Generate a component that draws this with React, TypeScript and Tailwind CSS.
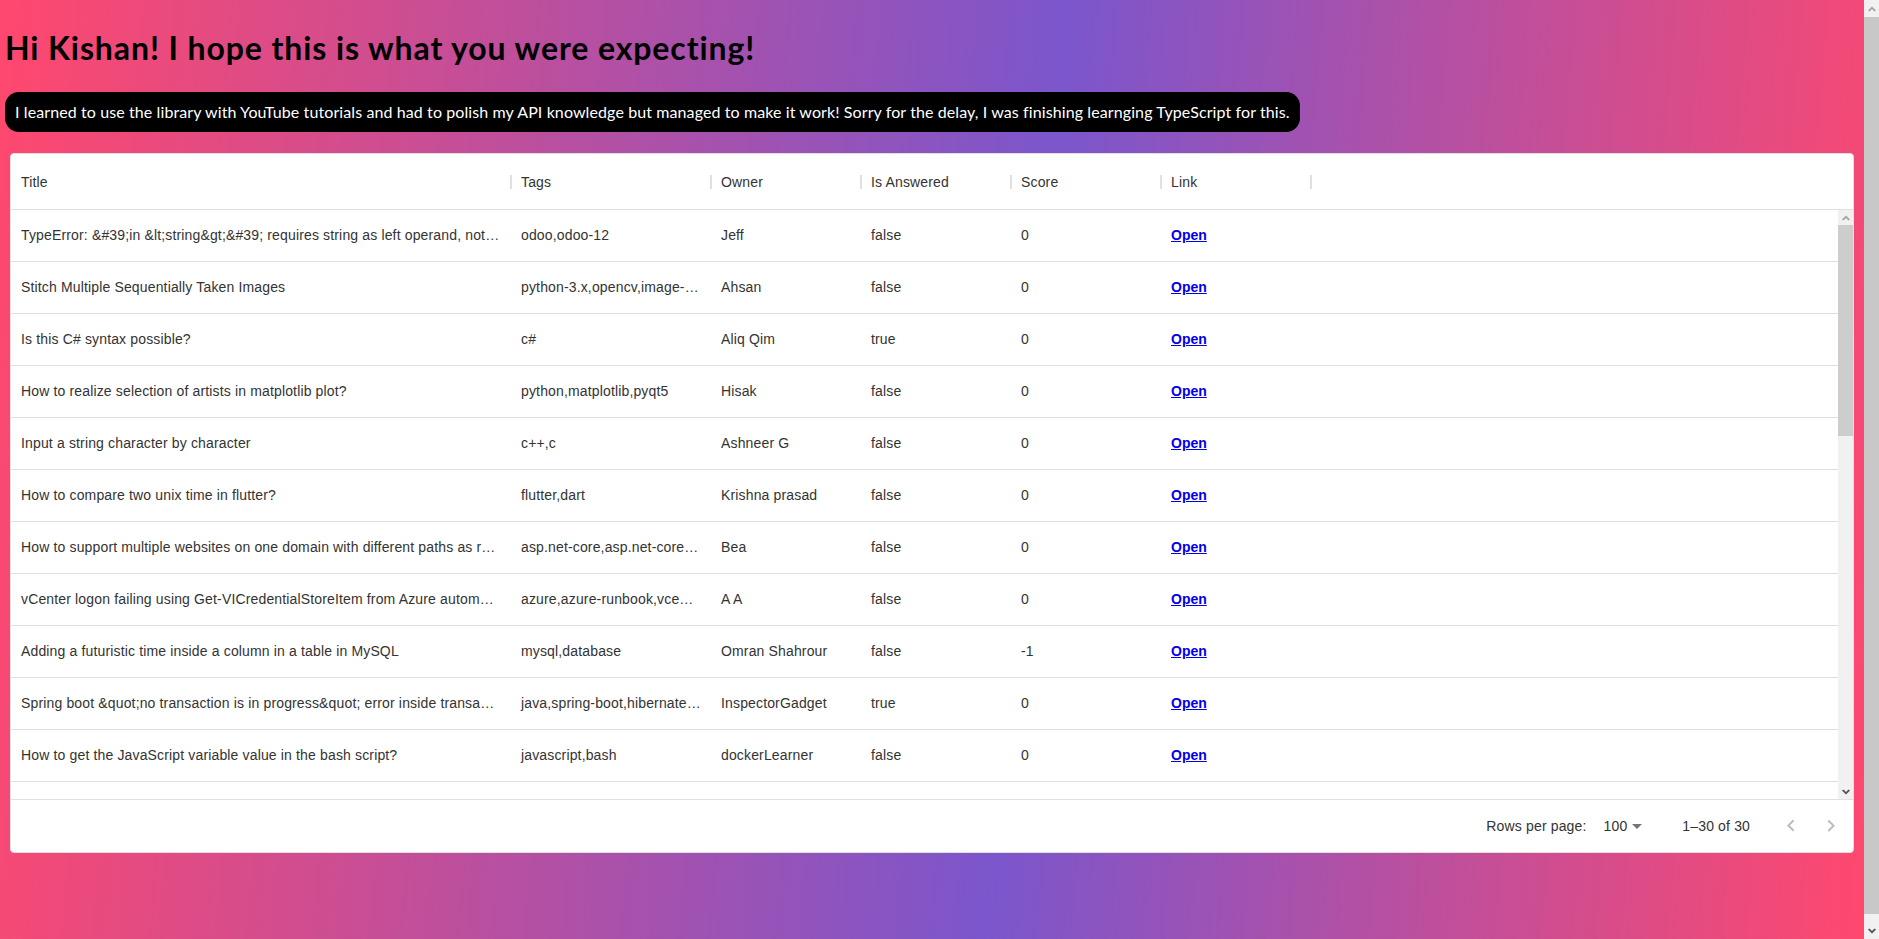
import type { ReactNode } from "react";

type Row = {
  title: string;
  tags: string;
  owner: string;
  answered: boolean;
  score: number;
};

const ROWS: Row[] = [
  { title: "TypeError: &#39;in &lt;string&gt;&#39; requires string as left operand, not NoneType", tags: "odoo,odoo-12", owner: "Jeff", answered: false, score: 0 },
  { title: "Stitch Multiple Sequentially Taken Images", tags: "python-3.x,opencv,image-processing", owner: "Ahsan", answered: false, score: 0 },
  { title: "Is this C# syntax possible?", tags: "c#", owner: "Aliq Qim", answered: true, score: 0 },
  { title: "How to realize selection of artists in matplotlib plot?", tags: "python,matplotlib,pyqt5", owner: "Hisak", answered: false, score: 0 },
  { title: "Input a string character by character", tags: "c++,c", owner: "Ashneer G", answered: false, score: 0 },
  { title: "How to compare two unix time in flutter?", tags: "flutter,dart", owner: "Krishna prasad", answered: false, score: 0 },
  { title: "How to support multiple websites on one domain with different paths as routes?", tags: "asp.net-core,asp.net-core-mvc", owner: "Bea", answered: false, score: 0 },
  { title: "vCenter logon failing using Get-VICredentialStoreItem from Azure automation runbook", tags: "azure,azure-runbook,vcenter,powercli", owner: "A A", answered: false, score: 0 },
  { title: "Adding a futuristic time inside a column in a table in MySQL", tags: "mysql,database", owner: "Omran Shahrour", answered: false, score: -1 },
  { title: "Spring boot &quot;no transaction is in progress&quot; error inside transactional method", tags: "java,spring-boot,hibernate,jpa", owner: "InspectorGadget", answered: true, score: 0 },
  { title: "How to get the JavaScript variable value in the bash script?", tags: "javascript,bash", owner: "dockerLearner", answered: false, score: 0 },
  { title: "Why does my Docker container exit immediately?", tags: "docker", owner: "Sam", answered: false, score: 0 },
];

const COLUMNS = [
  { label: "Title", width: "w-[500px]" },
  { label: "Tags", width: "w-[200px]" },
  { label: "Owner", width: "w-[150px]" },
  { label: "Is Answered", width: "w-[150px]" },
  { label: "Score", width: "w-[150px]" },
  { label: "Link", width: "w-[150px]" },
];

// petite flèche des barres de défilement
const ScrollArrow = ({ up, dark }: { up?: boolean; dark?: boolean }) => (
  <svg width="8" height="6" viewBox="0 0 8 6" className={up ? "" : "rotate-180"}>
    <polygon points="0,4.5 4,0.5 8,4.5 6.5,5.5 4,3 1.5,5.5" fill={dark ? "#505050" : "#a3a3a3"} />
  </svg>
);

const Cell = ({ width, children }: { width: string; children: ReactNode }) => (
  <div className={`${width} shrink-0 truncate px-[10px]`}>{children}</div>
);

const App = () => {
  return (
    <div className="flex h-[939px] w-full overflow-hidden font-['Lato',sans-serif]">
      <main className="h-full min-w-0 flex-1 overflow-hidden bg-[linear-gradient(95deg,#ff486e_0%,#7b56cc_55%,#ff486e_100%)] px-[5px] pt-[28px]">
        <h1 className="text-[32px] font-bold leading-[40px] tracking-[0.9px] text-black">
          Hi Kishan! I hope this is what you were expecting!
        </h1>

        <p className="mt-[24px] inline-block rounded-[14px] bg-black px-[10px] text-[16px] leading-[40px] tracking-[0.1px] text-white">
          I learned to use the library with YouTube tutorials and had to polish my API knowledge but managed to make it work! Sorry for the delay, I was finishing learnging TypeScript for this.
        </p>

        <div className="mx-[5px] mt-[21px] flex h-[700px] flex-col rounded-[4px] border border-[#e0e0e0] bg-white font-['Liberation_Sans',Arial,sans-serif] text-[14px] tracking-[0.15px] text-[#333]">
          {/* En-têtes */}
          <div className="flex h-[56px] shrink-0 items-center border-b border-[#e0e0e0]">
            {COLUMNS.map((col) => (
              <div key={col.label} className={`${col.width} flex h-full shrink-0 items-center pl-[10px]`}>
                <span className="flex-1 truncate pt-[1px]">{col.label}</span>
                <div className="-mr-[1px] h-[14px] w-[2px] bg-[#e0e0e0]" />
              </div>
            ))}
          </div>

          {/* Lignes + barre de défilement */}
          <div className="flex h-[589px] shrink-0">
            <div className="min-w-0 flex-1 overflow-hidden">
              {ROWS.map((row, i) => (
                <div key={i} className="flex h-[52px] items-center border-b border-[#e0e0e0]">
                  <Cell width="w-[500px]">{row.title}</Cell>
                  <Cell width="w-[200px]">{row.tags}</Cell>
                  <Cell width="w-[150px]">{row.owner}</Cell>
                  <Cell width="w-[150px]">{row.answered ? "true" : "false"}</Cell>
                  <Cell width="w-[150px]">{row.score}</Cell>
                  <Cell width="w-[150px]">
                    <a href="#" className="font-bold tracking-normal text-[#0000ee] underline">Open</a>
                  </Cell>
                </div>
              ))}
            </div>

            <div className="flex w-[15px] shrink-0 flex-col bg-[#f1f1f1]">
              <div className="flex h-[15px] items-center justify-center">
                <ScrollArrow up />
              </div>
              <div className="h-[211px] bg-[#cdcdcd]" />
              <div className="flex-1" />
              <div className="flex h-[15px] items-center justify-center">
                <ScrollArrow dark />
              </div>
            </div>
          </div>

          {/* Pagination */}
          <div className="flex h-[53px] shrink-0 items-center justify-end border-t border-[#e0e0e0] pr-[2px]">
            <span>Rows per page:</span>
            <div className="ml-[17px] flex items-center">
              <span>100</span>
              <svg width="24" height="24" viewBox="0 0 24 24" className="-ml-[2px]" fill="rgba(0,0,0,0.54)">
                <path d="M7 10l5 5 5-5z" />
              </svg>
            </div>
            <span className="ml-[33px]">1–30 of 30</span>
            <div className="ml-[21px] flex">
              <div className="flex h-[40px] w-[40px] items-center justify-center">
                <svg width="24" height="24" viewBox="0 0 24 24" fill="rgba(0,0,0,0.26)">
                  <path d="M15.41 16.09l-4.58-4.59 4.58-4.59L14 5.5l-6 6 6 6z" />
                </svg>
              </div>
              <div className="flex h-[40px] w-[40px] items-center justify-center">
                <svg width="24" height="24" viewBox="0 0 24 24" fill="rgba(0,0,0,0.26)">
                  <path d="M8.59 16.34l4.58-4.59-4.58-4.59L10 5.75l6 6-6 6z" />
                </svg>
              </div>
            </div>
          </div>
        </div>
      </main>

      {/* barre de défilement de la page */}
      <div className="flex h-full w-[15px] shrink-0 flex-col bg-[#f1f1f1]">
        <div className="flex h-[17px] items-center justify-center">
          <ScrollArrow up />
        </div>
        <div className="flex-1 bg-[#c8c8c8]" />
        <div className="mt-[8px] flex h-[17px] items-center justify-center">
          <ScrollArrow dark />
        </div>
      </div>
    </div>
  );
};

export default App;
